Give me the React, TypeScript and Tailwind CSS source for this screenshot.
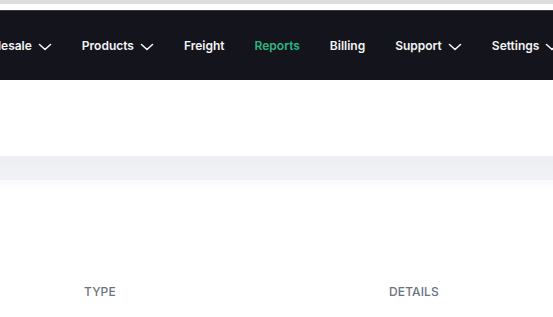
import React from "react";

function Chevron() {
  return (
    <svg width="14" height="8" viewBox="0 0 14 8" fill="none" className="ml-[6px] mt-[2px]">
      <path d="M1.5 1.5L7 6.5L12.5 1.5" stroke="currentColor" strokeWidth="1.6" strokeLinecap="round" strokeLinejoin="round" />
    </svg>
  );
}

const items: { label: string; chevron?: boolean; active?: boolean }[] = [
  { label: "Wholesale", chevron: true },
  { label: "Products", chevron: true },
  { label: "Freight" },
  { label: "Reports", active: true },
  { label: "Billing" },
  { label: "Support", chevron: true },
  { label: "Settings", chevron: true },
];

export default function App() {
  return (
    <div className="w-[553px] h-[317px] overflow-hidden bg-white" style={{ fontFamily: "Inter, 'Noto Sans', sans-serif" }}>
      <div className="h-[4px] bg-[#dcdcdc]" />
      <div className="h-[6px] bg-white" />
      <div className="h-[70px] bg-[#14151c] border-t border-[#3a3b42] flex items-center overflow-hidden">
        <div className="flex items-center gap-[30px] ml-[-29px] whitespace-nowrap shrink-0">
          {items.map((it) => (
            <div
              key={it.label}
              className={`flex items-center text-[12px] font-semibold ${it.active ? "text-[#2bb583]" : "text-[#f3f4f6]"}`}
            >
              <span>{it.label}</span>
              {it.chevron && <Chevron />}
            </div>
          ))}
        </div>
      </div>
      <div className="h-[76px]" />
      <div className="h-[24px] bg-gradient-to-b from-[#eceef2] to-[#f0f2f5]" />
      <div className="h-[10px] bg-gradient-to-b from-[#f9f9f9] to-white" />
      <div className="h-[93px]" />
      <div className="flex text-[12px] font-medium uppercase text-[#6b7280] tracking-[0.01em]">
        <div className="pl-[84px] w-[389px]">Type</div>
        <div>Details</div>
      </div>
    </div>
  );
}
